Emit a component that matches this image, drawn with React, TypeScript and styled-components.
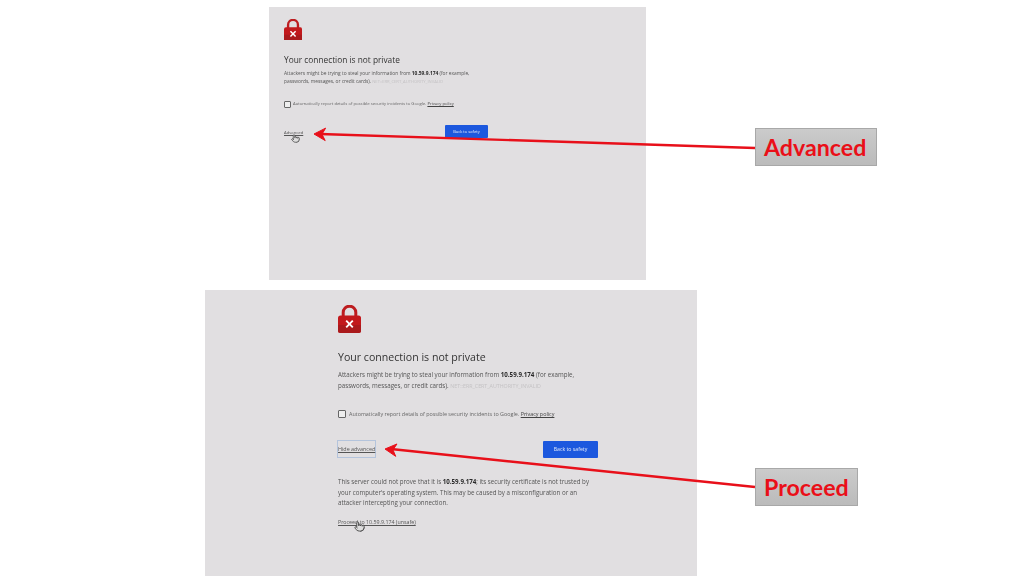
import styled, { createGlobalStyle } from "styled-components";
import { Pointer } from "lucide-react";

const Global = createGlobalStyle`
  html, body {
    margin: 0;
    padding: 0;
    background: #fff;
  }
`;

const Slide = styled.div`
  position: relative;
  width: 1024px;
  height: 576px;
  overflow: hidden;
  background: #fff;
  display: flex;
  flex-direction: column;
  gap: 10px;
  padding-top: 7px;
  box-sizing: border-box;
  font-family: "Open Sans", "Liberation Sans", sans-serif;
`;

const Panel = styled.div<{ $k: number; $left: number; $width: number; $height: number; $pad: number; $top: number }>`
  --k: ${(p) => p.$k};
  margin-left: ${(p) => p.$left}px;
  width: ${(p) => p.$width}px;
  height: ${(p) => p.$height}px;
  flex: none;
  box-sizing: border-box;
  padding: ${(p) => p.$top}px 0 0 ${(p) => p.$pad}px;
  background: #e1dfe1;
`;

const Content = styled.div`
  position: relative;
  width: calc(var(--k) * 260px);
  filter: blur(0.45px);
  color: #555;
`;

const LockBox = styled.div`
  width: calc(var(--k) * 23px);
  height: calc(var(--k) * 28px);

  svg {
    display: block;
    width: 100%;
    height: 100%;
  }
`;

const Heading = styled.h1`
  margin: calc(var(--k) * 17px) 0 0;
  font-size: calc(var(--k) * 10.6px);
  line-height: calc(var(--k) * 14px);
  font-weight: 400;
  color: #333;
  white-space: nowrap;
`;

const Body = styled.p`
  margin: calc(var(--k) * 5px) 0 0;
  font-size: calc(var(--k) * 6.2px);
  line-height: calc(var(--k) * 11px);
  color: #555;
  white-space: nowrap;

  b {
    color: #2a2a2a;
    font-weight: 700;
  }
`;

const ErrCode = styled.span`
  color: #c4c2c4;
  font-size: calc(var(--k) * 5.3px);
`;

const CheckRow = styled.div`
  display: flex;
  align-items: center;
  gap: calc(var(--k) * 3px);
  margin-top: calc(var(--k) * 17px);
  font-size: calc(var(--k) * 5.4px);
  line-height: calc(var(--k) * 10px);
  color: #666;
  white-space: nowrap;

  u {
    color: #444;
  }
`;

const CheckBox = styled.span`
  flex: none;
  width: calc(var(--k) * 6px);
  height: calc(var(--k) * 6px);
  border: 1px solid #666;
  border-radius: 1px;
  background: #eeeeee;
`;

const ActionRow = styled.div`
  display: flex;
  justify-content: space-between;
  align-items: center;
  width: calc(var(--k) * 260px);
  margin-top: calc(var(--k) * 22px);
`;

const AdvancedLink = styled.span<{ $focus?: boolean }>`
  font-size: calc(var(--k) * 5.4px);
  line-height: calc(var(--k) * 16px);
  color: #555;
  text-decoration: underline;
  white-space: nowrap;
  box-shadow: ${(p) => (p.$focus ? "0 0 0 1px #b4c4dc" : "none")};
`;

const SafetyButton = styled.span`
  display: flex;
  align-items: center;
  justify-content: center;
  width: calc(var(--k) * 55px);
  height: calc(var(--k) * 16.5px);
  border-radius: 1px;
  background: #1c58de;
  color: #e4ebfb;
  font-size: calc(var(--k) * 5.2px);
  white-space: nowrap;
`;

const Detail = styled(Body)`
  margin-top: calc(var(--k) * 19.5px);
  font-size: 6.2px;
  line-height: 10.5px;
`;

const ProceedLink = styled.span`
  display: block;
  margin-top: 8px;
  font-size: 5.3px;
  line-height: 10px;
  color: #555;
  text-decoration: underline;
  white-space: nowrap;
`;

const Hand = styled.span<{ $x: number; $y: number; $size: number }>`
  position: absolute;
  left: ${(p) => p.$x}px;
  top: ${(p) => p.$y}px;
  color: #444;
  line-height: 0;

  svg {
    width: ${(p) => p.$size}px;
    height: ${(p) => p.$size}px;
    fill: #ddd;
  }
`;

const Callout = styled.div<{ $x: number; $y: number; $width: number }>`
  position: absolute;
  left: ${(p) => p.$x}px;
  top: ${(p) => p.$y}px;
  width: ${(p) => p.$width}px;
  height: 38px;
  box-sizing: border-box;
  border: 1px solid #a8a8a8;
  background: linear-gradient(#cbcbcb, #bbbbbb);
  padding-left: 8px;
  display: flex;
  align-items: center;
  font-family: Lato, "Liberation Sans", sans-serif;
  font-weight: 700;
  font-size: 23.2px;
  color: #ea0f18;
  white-space: nowrap;
`;

const Arrows = styled.svg`
  position: absolute;
  left: 0;
  top: 0;
  width: 1024px;
  height: 576px;
  pointer-events: none;
`;

function Lock() {
  return (
    <svg viewBox="0 0 23 28">
      <path d="M5.2 12V7.5a6.3 6.3 0 0 1 12.6 0V12" fill="none" stroke="#bd1d20" strokeWidth="3" />
      <rect x="0" y="10.5" width="23" height="17.5" rx="2.5" fill="#c2191c" />
      <path d="M0 20h23v5.5a2.5 2.5 0 0 1-2.5 2.5h-18a2.5 2.5 0 0 1-2.5-2.5z" fill="#aa1a1c" />
      <path d="M8.2 15.7l6.6 6.6M14.8 15.7l-6.6 6.6" stroke="#fff" strokeWidth="1.9" />
    </svg>
  );
}

function Arrow({ x1, y1, x2, y2 }: { x1: number; y1: number; x2: number; y2: number }) {
  const a = Math.atan2(y1 - y2, x1 - x2);
  const at = (r: number, d: number) => `${x2 + r * Math.cos(a + d)},${y2 + r * Math.sin(a + d)}`;
  return (
    <g stroke="#e8101a" fill="#e8101a" strokeWidth="2.4">
      <line x1={x1} y1={y1} x2={x2 + 6} y2={y2} />
      <polygon points={`${x2},${y2} ${at(13, 0.5)} ${at(8, 0)} ${at(13, -0.5)}`} strokeWidth="1" />
    </g>
  );
}

export default function App() {
  return (
    <Slide>
      <Global />
      <Panel $k={0.785} $left={269} $width={377} $height={273} $pad={15} $top={11.5}>
        <Content>
          <LockBox>
            <Lock />
          </LockBox>
          <Heading>Your connection is not private</Heading>
          <Body>
            Attackers might be trying to steal your information from <b>10.59.9.174</b> (for example,
            <br />
            passwords, messages, or credit cards). <ErrCode>NET::ERR_CERT_AUTHORITY_INVALID</ErrCode>
          </Body>
          <CheckRow>
            <CheckBox />
            <span>
              Automatically report details of possible security incidents to Google. <u>Privacy policy</u>
            </span>
          </CheckRow>
          <ActionRow>
            <AdvancedLink>Advanced</AdvancedLink>
            <SafetyButton>Back to safety</SafetyButton>
          </ActionRow>
          <Hand $x={7} $y={115} $size={9}>
            <Pointer strokeWidth={2} />
          </Hand>
        </Content>
      </Panel>
      <Panel $k={1} $left={205} $width={492} $height={286} $pad={133} $top={15}>
        <Content>
          <LockBox>
            <Lock />
          </LockBox>
          <Heading>Your connection is not private</Heading>
          <Body>
            Attackers might be trying to steal your information from <b>10.59.9.174</b> (for example,
            <br />
            passwords, messages, or credit cards). <ErrCode>NET::ERR_CERT_AUTHORITY_INVALID</ErrCode>
          </Body>
          <CheckRow>
            <CheckBox />
            <span>
              Automatically report details of possible security incidents to Google. <u>Privacy policy</u>
            </span>
          </CheckRow>
          <ActionRow>
            <AdvancedLink $focus>Hide advanced</AdvancedLink>
            <SafetyButton>Back to safety</SafetyButton>
          </ActionRow>
          <Detail>
            This server could not prove that it is <b>10.59.9.174</b>; its security certificate is not trusted by
            <br />
            your computer's operating system. This may be caused by a misconfiguration or an
            <br />
            attacker intercepting your connection.
          </Detail>
          <ProceedLink>Proceed to 10.59.9.174 (unsafe)</ProceedLink>
          <Hand $x={16} $y={216} $size={11}>
            <Pointer strokeWidth={2} />
          </Hand>
        </Content>
      </Panel>
      <Arrows viewBox="0 0 1024 576">
        <Arrow x1={755} y1={148} x2={314} y2={134} />
        <Arrow x1={755} y1={487} x2={385} y2={449} />
      </Arrows>
      <Callout $x={755} $y={128} $width={122}>
        Advanced
      </Callout>
      <Callout $x={755} $y={468} $width={103}>
        Proceed
      </Callout>
    </Slide>
  );
}
